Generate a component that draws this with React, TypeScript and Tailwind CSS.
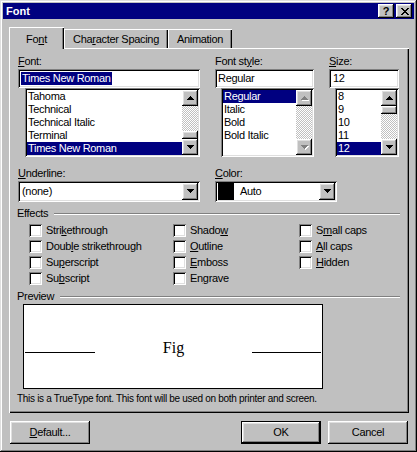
import React from "react";

const FONT = "font-['Liberation_Sans',Arial,sans-serif]";
const WIN = "shadow-[inset_-1px_-1px_#000,inset_1px_1px_#dfdfdf,inset_-2px_-2px_#808080,inset_2px_2px_#fff]";
const RAISED = "shadow-[inset_-1px_-1px_#000,inset_1px_1px_#fff,inset_-2px_-2px_#808080,inset_2px_2px_#dfdfdf]";
const SUNKEN = "shadow-[inset_1px_1px_#808080,inset_-1px_-1px_#fff,inset_2px_2px_#000,inset_-2px_-2px_#dfdfdf]";
const CHECKER = "bg-[repeating-conic-gradient(#c0c0c0_0%_25%,#fff_0%_50%)] bg-size-[2px_2px]";

function U({ children }: { children: React.ReactNode }) {
  return <span className="underline underline-offset-1 decoration-1">{children}</span>;
}

function Tri({ down, disabled }: { down?: boolean; disabled?: boolean }) {
  const rows = [0, 1, 2, 3];
  return (
    <svg width="8" height="5" viewBox="0 0 8 5" shapeRendering="crispEdges">
      {disabled &&
        rows.map((i) => (
          <rect key={"w" + i} x={3 - i + 1} y={(down ? 3 - i : i) + 1} width={2 * i + 1} height={1} fill="#fff" />
        ))}
      {rows.map((i) => (
        <rect key={i} x={3 - i} y={down ? 3 - i : i} width={2 * i + 1} height={1} fill={disabled ? "#808080" : "#000"} />
      ))}
    </svg>
  );
}

function ArrowBtn({ down, disabled, tall }: { down?: boolean; disabled?: boolean; tall?: boolean }) {
  return (
    <div className={`w-[16px] ${tall ? "h-[17px]" : "h-[16px]"} bg-[#c0c0c0] flex items-center justify-center pl-[1px] ${RAISED}`}>
      <Tri down={down} disabled={disabled} />
    </div>
  );
}

function Scrollbar({ thumb, disabled }: { thumb?: "top" | "bottom"; disabled?: boolean }) {
  return (
    <div className="w-[16px] flex flex-col">
      <ArrowBtn disabled={disabled} />
      <div className={`flex-1 flex flex-col ${thumb === "bottom" ? "justify-end" : "justify-start"} ${CHECKER}`}>
        {thumb && <div className={`h-[8px] bg-[#c0c0c0] ${RAISED}`} />}
      </div>
      <ArrowBtn down disabled={disabled} />
    </div>
  );
}

function ListBox({
  items,
  selected,
  className,
  thumb,
  disabled,
}: {
  items: string[];
  selected: number;
  className: string;
  thumb?: "top" | "bottom";
  disabled?: boolean;
}) {
  return (
    <div className={`h-[69px] bg-white p-[2px] flex ${SUNKEN} ${className}`}>
      <div className="flex-1 flex flex-col">
        {items.map((t, i) => (
          <div
            key={t}
            className={`h-[13px] leading-[13px] pl-[1px] whitespace-nowrap ${i === selected ? "bg-[#000080] text-white" : ""}`}
          >
            {t}
          </div>
        ))}
      </div>
      <Scrollbar thumb={thumb} disabled={disabled} />
    </div>
  );
}

function Check({ children }: { children: React.ReactNode }) {
  return (
    <div className="h-[16px] flex items-center">
      <div className={`w-[13px] h-[13px] bg-white shrink-0 ${SUNKEN}`} />
      <div className="ml-[4px] whitespace-nowrap">{children}</div>
    </div>
  );
}

function Button({ children, def, className }: { children: React.ReactNode; def?: boolean; className: string }) {
  return (
    <div className={`h-[23px] ${def ? "border border-black" : ""} ${className}`}>
      <div className={`w-full h-full bg-[#c0c0c0] flex items-center justify-center ${RAISED}`}>{children}</div>
    </div>
  );
}

function XGlyph() {
  const px: [number, number, number][] = [
    [0, 0, 2], [6, 0, 2],
    [1, 1, 2], [5, 1, 2],
    [2, 2, 4],
    [3, 3, 2],
    [2, 4, 4],
    [1, 5, 2], [5, 5, 2],
    [0, 6, 2], [6, 6, 2],
  ];
  return (
    <svg width="8" height="7" viewBox="0 0 8 7" shapeRendering="crispEdges">
      {px.map(([x, y, w], i) => (
        <rect key={i} x={x} y={y} width={w} height={1} fill="#000" />
      ))}
    </svg>
  );
}

function Etched() {
  return <div className="flex-1 h-[2px] bg-white border-t border-t-[#808080]" />;
}

export default function App() {
  return (
    <div className={`w-[417px] h-[452px] bg-[#c0c0c0] p-[3px] text-[11px] leading-[13px] tracking-[-0.3px] text-black ${FONT} ${WIN} flex flex-col`}>
      {/* Title bar */}
      <div className="h-[16px] bg-[#000080] flex items-center pl-[3px] pr-[2px]">
        <span className="flex-1 text-white font-bold tracking-normal">Font</span>
        <div className={`w-[16px] h-[14px] bg-[#c0c0c0] flex items-center justify-center font-bold text-[11px] leading-[11px] ${RAISED}`}>
          ?
        </div>
        <div className={`ml-[2px] w-[16px] h-[14px] bg-[#c0c0c0] flex items-center justify-center pl-[1px] ${RAISED}`}>
          <XGlyph />
        </div>
      </div>

      {/* Tabs */}
      <div className="mt-[8px] ml-[6px] h-[21px] flex items-end">
        <div className={`relative z-10 w-[55px] h-[22px] -mb-px bg-[#c0c0c0] flex justify-center pt-[6px] shadow-[inset_1px_1px_#fff,inset_-1px_0_#000,inset_-2px_0_#808080]`}>
          Fo<U>n</U>t
        </div>
        <div className="w-[104px] h-[19px] bg-[#c0c0c0] flex justify-center pt-[4px] shadow-[inset_1px_1px_#fff,inset_-1px_0_#000,inset_-2px_0_#808080]">
          Cha<U>r</U>acter Spacing
        </div>
        <div className="w-[64px] h-[19px] bg-[#c0c0c0] flex justify-center pt-[4px] shadow-[inset_1px_1px_#fff,inset_-1px_0_#000,inset_-2px_0_#808080]">
          Animation
        </div>
      </div>

      {/* Panel */}
      <div className={`ml-[6px] w-[400px] h-[365px] bg-[#c0c0c0] pl-[9px] pt-[7px] shadow-[inset_1px_1px_#fff,inset_-1px_-1px_#000,inset_-2px_-2px_#808080]`}>
        <div className="w-[382px] flex flex-col">
          {/* Row 1 */}
          <div className="flex">
            <div className="w-[182px] flex flex-col">
              <div className="h-[14px]">
                <U>F</U>ont:
              </div>
              <div className={`h-[19px] bg-white p-[2px] flex items-center ${SUNKEN}`}>
                <span className="ml-[1px] bg-[#000080] text-white px-[1px] whitespace-nowrap">Times New Roman</span>
              </div>
              <ListBox
                className="ml-[7px] w-[175px]"
                items={["Tahoma", "Technical", "Technical Italic", "Terminal", "Times New Roman"]}
                selected={4}
                thumb="bottom"
              />
            </div>
            <div className="ml-[15px] w-[99px] flex flex-col">
              <div className="h-[14px]">
                Font st<U>y</U>le:
              </div>
              <div className={`h-[19px] bg-white p-[2px] pl-[3px] flex items-center ${SUNKEN}`}>Regular</div>
              <ListBox
                className="ml-[6px] w-[93px]"
                items={["Regular", "Italic", "Bold", "Bold Italic"]}
                selected={0}
                disabled
              />
            </div>
            <div className="ml-[15px] w-[70px] flex flex-col">
              <div className="h-[14px]">
                <U>S</U>ize:
              </div>
              <div className={`h-[19px] bg-white p-[2px] pl-[4px] flex items-center ${SUNKEN}`}>12</div>
              <ListBox className="ml-[6px] w-[64px]" items={["8", "9", "10", "11", "12"]} selected={4} thumb="top" />
            </div>
          </div>

          {/* Row 2 */}
          <div className="mt-[10px] flex">
            <div className="w-[182px] flex flex-col">
              <div className="h-[14px]">
                <U>U</U>nderline:
              </div>
              <div className={`h-[21px] bg-white p-[2px] flex ${SUNKEN}`}>
                <div className="flex-1 flex items-center pl-[2px]">(none)</div>
                <ArrowBtn down tall />
              </div>
            </div>
            <div className="ml-[15px] w-[122px] flex flex-col">
              <div className="h-[14px]">
                <U>C</U>olor:
              </div>
              <div className={`h-[21px] bg-white p-[2px] flex ${SUNKEN}`}>
                <div className="ml-[1px] w-[16px] bg-black" />
                <div className="flex-1 flex items-center pl-[6px]">Auto</div>
                <ArrowBtn down tall />
              </div>
            </div>
          </div>

          {/* Effects */}
          <div className="mt-[5px] h-[13px] flex items-center -ml-px">
            <span>Effects</span>
            <div className="ml-[6px] flex-1 flex">
              <Etched />
            </div>
          </div>
          <div className="mt-[2px] pl-[11px] grid grid-cols-[144px_126px_1fr]">
            <div className="flex flex-col">
              <Check>
                Stri<U>k</U>ethrough
              </Check>
              <Check>
                Doub<U>l</U>e strikethrough
              </Check>
              <Check>
                Su<U>p</U>erscript
              </Check>
              <Check>
                Su<U>b</U>script
              </Check>
            </div>
            <div className="flex flex-col">
              <Check>
                Shado<U>w</U>
              </Check>
              <Check>
                <U>O</U>utline
              </Check>
              <Check>
                <U>E</U>mboss
              </Check>
              <Check>
                En<U>g</U>rave
              </Check>
            </div>
            <div className="flex flex-col">
              <Check>
                S<U>m</U>all caps
              </Check>
              <Check>
                <U>A</U>ll caps
              </Check>
              <Check>
                <U>H</U>idden
              </Check>
            </div>
          </div>

          {/* Preview */}
          <div className="mt-[4px] h-[14px] flex items-start -ml-px">
            <div className="h-[13px] flex items-center flex-1">
              <span>Preview</span>
              <div className="ml-[6px] flex-1 flex">
                <Etched />
              </div>
            </div>
          </div>
          <div className="ml-[5px] w-[300px] h-[85px] border border-black bg-white flex items-start">
            <div className="ml-[1px] mt-[47px] w-[70px] h-px bg-black" />
            <div className="flex-1 mt-[34px] text-center font-['Liberation_Serif','Times_New_Roman',serif] text-[16px] leading-[18px] tracking-normal">
              Fig
            </div>
            <div className="mr-[1px] mt-[47px] w-[69px] h-px bg-black" />
          </div>
          <div className="mt-[3px] -ml-px whitespace-nowrap text-[10px] tracking-[-0.3px]">
            This is a TrueType font. This font will be used on both printer and screen.
          </div>
        </div>
      </div>

      {/* Footer buttons */}
      <div className="mt-[8px] flex pl-[7px] pr-[6px]">
        <Button className="w-[80px]">
          <span>
            <U>D</U>efault...
          </span>
        </Button>
        <div className="flex-1" />
        <Button def className="w-[80px]">
          OK
        </Button>
        <Button className="ml-[7px] w-[80px]">Cancel</Button>
      </div>
    </div>
  );
}
